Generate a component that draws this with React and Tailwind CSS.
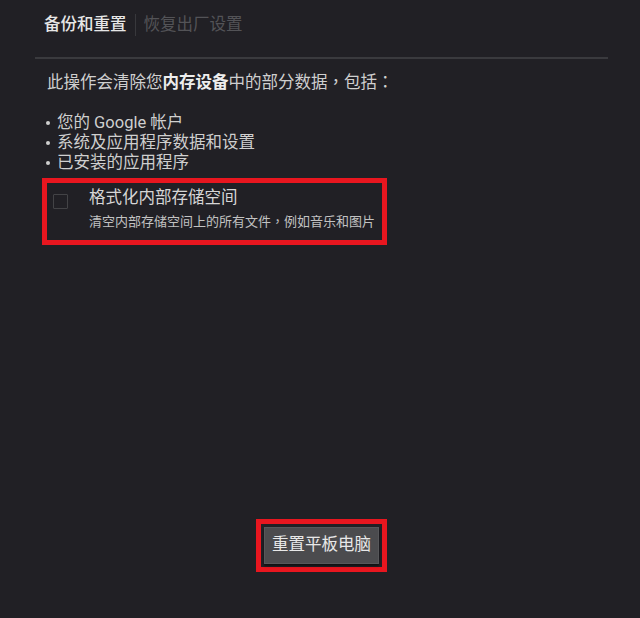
function P({ children }) {
  return <span style={{ fontFamily: '"Noto Sans CJK TC", sans-serif' }}>{children}</span>;
}

export default function App() {
  return (
    <div
      className="w-[640px] h-[618px] bg-[#212025] flex flex-col"
      style={{ fontFamily: 'Roboto, "Noto Sans CJK SC", sans-serif' }}
    >
      <div className="h-[50px] flex items-center pl-[44px] text-[16.5px]">
        <span className="text-[#e6e6e6] font-medium">备份和重置</span>
        <span className="w-px h-[22px] bg-[#38383c] mx-[8px]"></span>
        <span className="text-[#535357]">恢复出厂设置</span>
      </div>
      <div className="mt-[7px] h-[2px] ml-[35px] mr-[32px] bg-[#3a3a3e]"></div>

      <div className="mt-[12px] pl-[47px] text-[16.5px] leading-[20px] text-[#cfcfcf]">
        <p className="whitespace-nowrap">
          此操作会清除您<b className="font-bold text-[#ededed]">内存设备</b>中的部分数据<P>，</P>包括<P>：</P>
        </p>
        <ul className="mt-[20px] -ml-[1px]">
          {['您的 Google 帐户', '系统及应用程序数据和设置', '已安装的应用程序'].map((t) => (
            <li key={t} className="flex items-center">
              <span className="w-[11px] shrink-0 flex">
                <span className="w-[4px] h-[4px] rounded-full bg-[#cfcfcf]"></span>
              </span>
              <span>{t}</span>
            </li>
          ))}
        </ul>
      </div>

      <div className="mt-[5px] ml-[42px] w-[345px] h-[67px] border-[5px] border-[#e8161f] flex pl-[6px]">
        <div className="mt-[11px] w-[15px] h-[15px] border-[1.5px] border-[#434346] rounded-[1px] shrink-0"></div>
        <div className="ml-[21px] pt-[5px] flex flex-col">
          <span className="text-[16.5px] leading-[20px] text-[#d6d6d6] whitespace-nowrap">格式化内部存储空间</span>
          <span className="mt-[4px] text-[13px] leading-[18px] text-[#c2c2c2] whitespace-nowrap">
            清空内部存储空间上的所有文件<P>，</P>例如音乐和图片
          </span>
        </div>
      </div>

      <div className="flex-1"></div>

      <div className="flex justify-center pl-[3px] mb-[46px]">
        <div className="border-[5px] border-[#e8161f] p-[3px]">
          <button className="w-[115px] h-[37px] bg-[#4b4b4e] border border-[#57575a] text-[16.5px] text-[#e8e8e8] flex items-center justify-center shadow-[0_2px_2px_rgba(0,0,0,0.5)]">
            重置平板电脑
          </button>
        </div>
      </div>
    </div>
  );
}
